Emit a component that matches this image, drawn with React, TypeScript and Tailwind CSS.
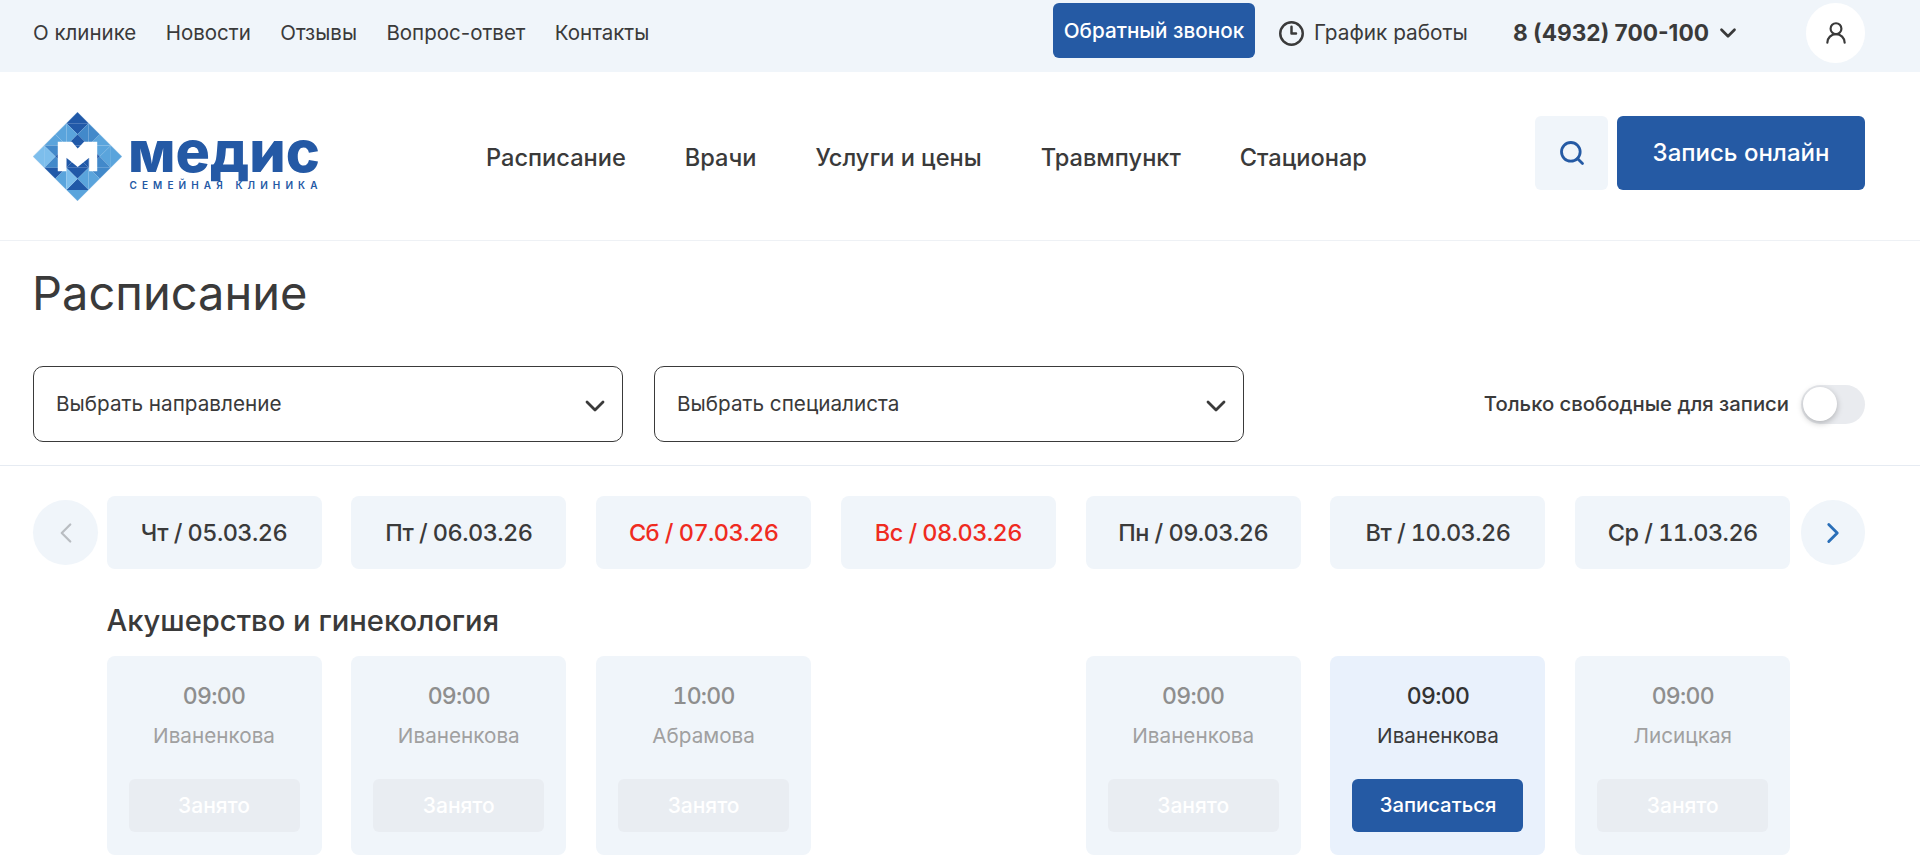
import { ChevronDown, ChevronLeft, ChevronRight, Clock3, Search, UserRound } from "lucide-react";

const D = "#2159a8";
const M = "#4289ca";
const L = "#5aa4dc";
const X = "#7dbeec";

// top, right, bottom, left facet of the logo tiles, 5 by 5, centred on the grid points
const tiles = [
  [M, M, M, M], [M, M, M, M], [D, M, D, M], [M, M, M, M], [M, M, M, M],
  [M, M, M, M], [M, L, L, M], [D, M, D, L], [M, M, L, M], [M, M, M, M],
  [M, X, M, M], [M, D, M, X], [D, D, D, D], [L, L, M, D], [M, M, M, L],
  [M, M, M, M], [D, L, M, M], [D, L, D, X], [M, M, M, L], [M, M, M, M],
  [M, M, M, M], [M, M, M, M], [L, M, M, M], [M, M, M, M], [M, M, M, M],
];

function Logo() {
  return (
    <div className="flex items-center gap-[8px]">
      <svg width="89" height="89" viewBox="0 0 88 88">
        <clipPath id="romb">
          <polygon points="44,0 88,44 44,88 0,44" />
        </clipPath>
        <g clipPath="url(#romb)">
          {tiles.map((t, i) => {
            const cx = (i % 5) * 22;
            const cy = Math.floor(i / 5) * 22;
            const c = `${cx},${cy}`;
            const a = `${cx - 11},${cy - 11}`;
            const b = `${cx + 11},${cy - 11}`;
            const d = `${cx + 11},${cy + 11}`;
            const e = `${cx - 11},${cy + 11}`;
            return (
              <g key={i}>
                <polygon fill={t[0]} points={`${a} ${b} ${c}`} />
                <polygon fill={t[1]} points={`${b} ${d} ${c}`} />
                <polygon fill={t[2]} points={`${d} ${e} ${c}`} />
                <polygon fill={t[3]} points={`${e} ${a} ${c}`} />
              </g>
            );
          })}
        </g>
        <polygon
          fill="#fff"
          points="24.5,29.5 38.5,29.5 44.2,36 50.5,29.5 63.5,29.5 63.5,58.7 55.5,58.7 55.5,45.3 44.2,54.5 33,45.3 33,58.7 24.5,58.7"
        />
      </svg>
      <svg width="191" height="72" viewBox="0 0 191 72" className="overflow-visible">
        <text
          x="-2"
          y="51.5"
          textLength="192"
          lengthAdjust="spacingAndGlyphs"
          fill="#2459a5"
          fontFamily="Inter, sans-serif"
          fontWeight="800"
          fontSize="57"
        >
          медис
        </text>
        <text
          x="-0.5"
          y="68.5"
          textLength="188"
          fill="#2459a5"
          fontFamily="Inter, sans-serif"
          fontWeight="600"
          fontSize="10"
        >
          СЕМЕЙНАЯ КЛИНИКА
        </text>
      </svg>
    </div>
  );
}

const days = [
  { label: "Чт / 05.03.26" },
  { label: "Пт / 06.03.26" },
  { label: "Сб / 07.03.26", red: true },
  { label: "Вс / 08.03.26", red: true },
  { label: "Пн / 09.03.26" },
  { label: "Вт / 10.03.26" },
  { label: "Ср / 11.03.26" },
];

const slots = [
  { time: "09:00", name: "Иваненкова" },
  { time: "09:00", name: "Иваненкова" },
  { time: "10:00", name: "Абрамова" },
  null,
  { time: "09:00", name: "Иваненкова" },
  { time: "09:00", name: "Иваненкова", free: true },
  { time: "09:00", name: "Лисицкая" },
];

function SelectBox({ label }: { label: string }) {
  return (
    <div className="flex h-[76px] w-[590px] items-center justify-between rounded-[10px] border-[1.5px] border-[#3a3a3a] pl-[22px] pr-[11px] text-[20.7px]">
      <span>{label}</span>
      <ChevronDown size={32} strokeWidth={2.1} className="mt-[4px]" />
    </div>
  );
}

function Slot({ time, name, free }: { time: string; name: string; free?: boolean }) {
  return (
    <div
      className={
        free
          ? "flex h-[199px] flex-col items-center rounded-[8px] bg-[#e9f1fc] px-[22px] pt-[25px]"
          : "flex h-[199px] flex-col items-center rounded-[8px] bg-[#f0f5fa] px-[22px] pt-[25px]"
      }
    >
      <div
        className={
          free
            ? "text-[23px] leading-[30px] font-medium tracking-[-0.7px] text-[#333333] tabular-nums"
            : "text-[23px] leading-[30px] font-medium tracking-[-0.7px] text-[#8e8e8e] tabular-nums"
        }
      >
        {time}
      </div>
      <div className={free ? "mt-[10px] text-[20.7px] leading-[30px] text-[#3a3a3a]" : "mt-[10px] text-[20.7px] leading-[30px] text-[#a0a0a0]"}>
        {name}
      </div>
      <div
        className={
          free
            ? "mt-[28px] flex h-[53px] w-full items-center justify-center rounded-[6px] bg-[#255aa4] text-[20.3px] font-medium text-white"
            : "mt-[28px] flex h-[53px] w-full items-center justify-center rounded-[6px] bg-[#e9edf2] text-[21px] font-medium text-white"
        }
      >
        {free ? "Записаться" : "Занято"}
      </div>
    </div>
  );
}

export default function App() {
  return (
    <div className="h-[863px] overflow-hidden bg-white text-[#3a3a3a] [font-family:Inter,sans-serif]">
      <div className="flex h-[72px] items-start bg-[#f0f5fa] pl-[33px] pr-[55px] pt-[3px]">
        <nav className="flex h-[60px] items-center gap-[29.4px] text-[20.5px]">
          <a>О клинике</a>
          <a>Новости</a>
          <a>Отзывы</a>
          <a>Вопрос-ответ</a>
          <a>Контакты</a>
        </nav>
        <div className="ml-auto flex items-start">
          <button className="h-[55px] w-[202px] rounded-[6px] bg-[#255aa4] text-[20.7px] font-medium text-white">
            Обратный звонок
          </button>
          <div className="ml-[23px] flex h-[60px] w-[190px] items-center gap-[9px] text-[20.8px]">
            <Clock3 size={27} strokeWidth={2.2} />
            <span>График работы</span>
          </div>
          <div className="ml-[45px] flex h-[60px] items-center gap-[6px] text-[22.7px] font-bold">
            <span>8 (4932) 700-100</span>
            <ChevronDown size={26} strokeWidth={2.5} />
          </div>
          <div className="ml-[65px] flex h-[60px] w-[59px] items-center justify-center rounded-full bg-white">
            <UserRound size={26} strokeWidth={2} />
          </div>
        </div>
      </div>

      <header className="flex h-[169px] items-center border-b border-[#eef1f5] pl-[33px] pr-[55px]">
        <Logo />
        <nav className="ml-[165px] flex gap-[59px] pt-[3px] text-[23.6px] font-medium">
          <a>Расписание</a>
          <a>Врачи</a>
          <a>Услуги и цены</a>
          <a>Травмпункт</a>
          <a>Стационар</a>
        </nav>
        <div className="mb-[7px] ml-auto flex gap-[9px]">
          <button className="flex h-[74px] w-[73px] items-center justify-center rounded-[6px] bg-[#f0f5fa] text-[#255aa4]">
            <Search size={28} strokeWidth={2.4} />
          </button>
          <button className="h-[74px] w-[248px] rounded-[6px] bg-[#255aa4] text-[24px] font-medium text-white">
            Запись онлайн
          </button>
        </div>
      </header>

      <section className="border-b border-[#e6ebf2] pb-[23px] pl-[33px] pr-[55px] pt-[20px]">
        <h1 className="-ml-[1px] text-[47px] leading-[64px] font-normal">Расписание</h1>
        <div className="mt-[41px] flex items-center gap-[31px]">
          <SelectBox label="Выбрать направление" />
          <SelectBox label="Выбрать специалиста" />
          <div className="ml-auto flex items-center gap-[12px]">
            <span className="text-[20.3px] font-medium">Только свободные для записи</span>
            <div className="flex h-[39px] w-[64px] items-center rounded-full bg-[#e9ebef] px-[2px]">
              <div className="h-[34px] w-[34px] rounded-full bg-white shadow-[0_2px_6px_rgba(0,0,0,0.25)]" />
            </div>
          </div>
        </div>
      </section>

      <section className="pl-[33px] pr-[55px] pt-[30px]">
        <div className="flex items-center">
          <button className="flex h-[65px] w-[65px] items-center justify-center rounded-full bg-[#f0f5fa] text-[#b9bdc2]">
            <ChevronLeft size={34} strokeWidth={1.6} />
          </button>
          <div className="ml-[8.5px] grid grid-cols-[repeat(7,215px)] gap-[29.8px]">
            {days.map((d) => (
              <div
                key={d.label}
                className={
                  d.red
                    ? "flex h-[73px] items-center justify-center rounded-[8px] bg-[#f0f5fa] text-[23.5px] font-medium tracking-[-0.55px] text-[#ef2b1f] tabular-nums"
                    : "flex h-[73px] items-center justify-center rounded-[8px] bg-[#f0f5fa] text-[23.5px] font-medium tracking-[-0.55px] tabular-nums"
                }
              >
                {d.label}
              </div>
            ))}
          </div>
          <button className="ml-auto flex h-[65px] w-[64px] items-center justify-center rounded-full bg-[#f0f5fa] text-[#2a6fb8]">
            <ChevronRight size={34} strokeWidth={2} />
          </button>
        </div>

        <div className="pl-[73.5px]">
          <h2 className="mt-[30px] text-[29.2px] leading-[44px] font-medium">Акушерство и гинекология</h2>
          <div className="mt-[13px] grid grid-cols-[repeat(7,215px)] gap-[29.8px]">
            {slots.map((s, i) => (s ? <Slot key={i} {...s} /> : <div key={i} />))}
          </div>
        </div>
      </section>
    </div>
  );
}
